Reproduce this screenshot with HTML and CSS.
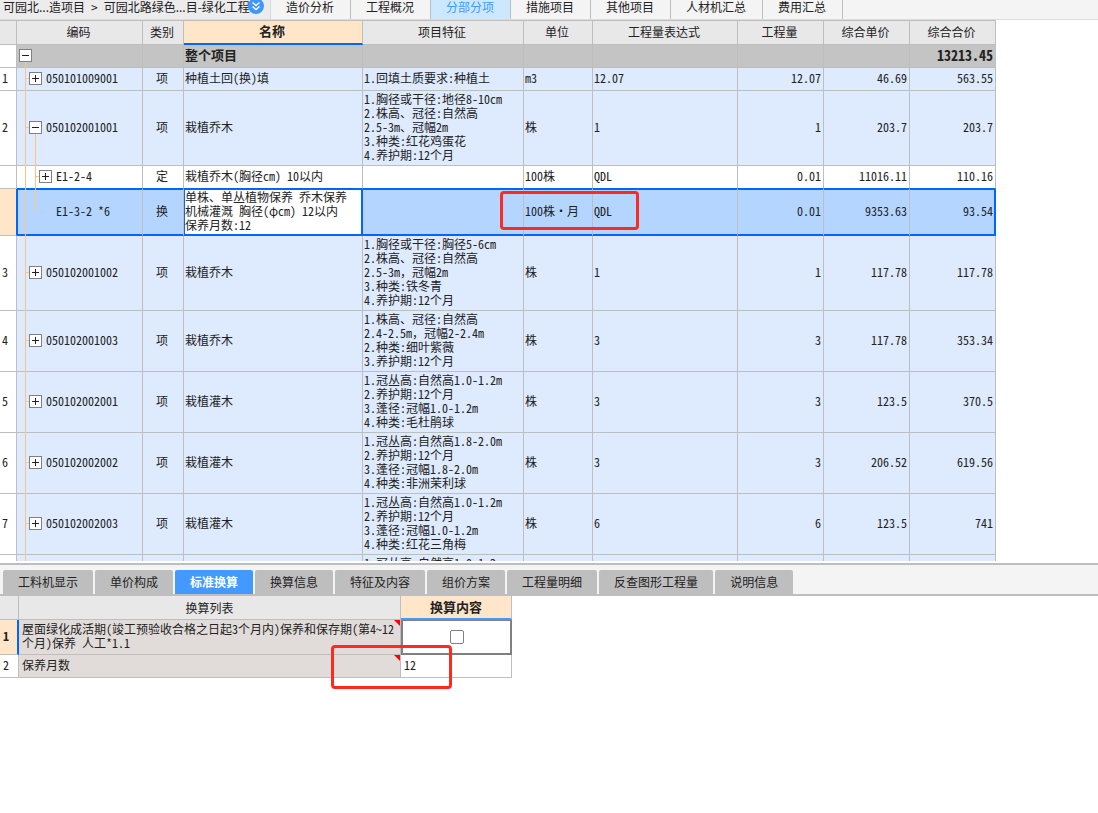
FILE: index.html
```html
<!DOCTYPE html>
<html lang="zh-CN">
<head>
<meta charset="utf-8">
<title>分部分项</title>
<link rel="stylesheet" href="styles.css">
</head>
<body>
<header class="topbar">
  <div class="crumbs"><div class="path"><span>可园北...造项目</span><span>&gt;</span><span>可园北路绿色...目-绿化工程</span></div>
    <button class="crumb-more" type="button" aria-label="展开"><svg width="16" height="16" viewBox="0 0 16 16"><circle cx="8" cy="8" r="8" fill="#3f96fb"/><path d="M4.5 4.5 8 7.5l3.5-3M4.5 8.5 8 11.5l3.5-3" fill="none" stroke="#fff" stroke-width="1.4"/></svg></button>
  </div>
  <nav class="main-tabs">
    <button type="button">造价分析</button>
    <button type="button">工程概况</button>
    <button type="button" class="active">分部分项</button>
    <button type="button">措施项目</button>
    <button type="button">其他项目</button>
    <button type="button">人材机汇总</button>
    <button type="button">费用汇总</button>
  </nav>
</header>

<main class="grid-pane">
  <table class="grid">
    <colgroup><col class="w-num"><col class="w-code"><col class="w-kind"><col class="w-name"><col class="w-feat"><col class="w-unit"><col class="w-expr"><col class="w-val"><col class="w-val"><col class="w-val"></colgroup>
    <thead>
      <tr><th></th><th>编码</th><th>类别</th><th class="current">名称</th><th>项目特征</th><th>单位</th><th>工程量表达式</th><th>工程量</th><th>综合单价</th><th>综合合价</th></tr>
    </thead>
    <tbody>
      <tr class="total"><td class="num"></td><td class="code root"><button class="toggle open" type="button" aria-label="折叠"></button></td><td></td><td>整个项目</td><td></td><td></td><td></td><td></td><td></td><td class="val">13213.45</td></tr>
      <tr><td class="num">1</td><td class="code item"><button class="toggle" type="button" aria-label="展开"></button>050101009001</td><td class="kind">项</td><td>种植土回(换)填</td><td>1.回填土质要求:种植土</td><td>m3</td><td>12.07</td><td class="val">12.07</td><td class="val">46.69</td><td class="val">563.55</td></tr>
      <tr><td class="num">2</td><td class="code item parent"><button class="toggle open" type="button" aria-label="折叠"></button>050102001001</td><td class="kind">项</td><td>栽植乔木</td><td>1.胸径或干径:地径8-10cm<br>2.株高、冠径:自然高<br>2.5-3m、冠幅2m<br>3.种类:红花鸡蛋花<br>4.养护期:12个月</td><td>株</td><td>1</td><td class="val">1</td><td class="val">203.7</td><td class="val">203.7</td></tr>
      <tr class="quota before-selected"><td class="num"></td><td class="code sub"><button class="toggle" type="button" aria-label="展开"></button>E1-2-4</td><td class="kind">定</td><td>栽植乔木(胸径cm) 10以内</td><td></td><td>100株</td><td>QDL</td><td class="val">0.01</td><td class="val">11016.11</td><td class="val">110.16</td></tr>
      <tr class="selected"><td class="num"></td><td class="code sub last">E1-3-2 *6</td><td class="kind">换</td><td class="editing">单株、单丛植物保养 乔木保养<br>机械灌溉 胸径(φcm) 12以内<br>保养月数:12</td><td></td><td>100株·月</td><td>QDL</td><td class="val">0.01</td><td class="val">9353.63</td><td class="val">93.54</td></tr>
      <tr><td class="num">3</td><td class="code item"><button class="toggle" type="button" aria-label="展开"></button>050102001002</td><td class="kind">项</td><td>栽植乔木</td><td>1.胸径或干径:胸径5-6cm<br>2.株高、冠径:自然高<br>2.5-3m，冠幅2m<br>3.种类:铁冬青<br>4.养护期:12个月</td><td>株</td><td>1</td><td class="val">1</td><td class="val">117.78</td><td class="val">117.78</td></tr>
      <tr><td class="num">4</td><td class="code item"><button class="toggle" type="button" aria-label="展开"></button>050102001003</td><td class="kind">项</td><td>栽植乔木</td><td>1.株高、冠径:自然高<br>2.4-2.5m，冠幅2-2.4m<br>2.种类:细叶紫薇<br>3.养护期:12个月</td><td>株</td><td>3</td><td class="val">3</td><td class="val">117.78</td><td class="val">353.34</td></tr>
      <tr><td class="num">5</td><td class="code item"><button class="toggle" type="button" aria-label="展开"></button>050102002001</td><td class="kind">项</td><td>栽植灌木</td><td>1.冠丛高:自然高1.0-1.2m<br>2.养护期:12个月<br>3.蓬径:冠幅1.0-1.2m<br>4.种类:毛杜鹃球</td><td>株</td><td>3</td><td class="val">3</td><td class="val">123.5</td><td class="val">370.5</td></tr>
      <tr><td class="num">6</td><td class="code item"><button class="toggle" type="button" aria-label="展开"></button>050102002002</td><td class="kind">项</td><td>栽植灌木</td><td>1.冠丛高:自然高1.8-2.0m<br>2.养护期:12个月<br>3.蓬径:冠幅1.8-2.0m<br>4.种类:非洲茉利球</td><td>株</td><td>3</td><td class="val">3</td><td class="val">206.52</td><td class="val">619.56</td></tr>
      <tr><td class="num">7</td><td class="code item"><button class="toggle" type="button" aria-label="展开"></button>050102002003</td><td class="kind">项</td><td>栽植灌木</td><td>1.冠丛高:自然高1.0-1.2m<br>2.养护期:12个月<br>3.蓬径:冠幅1.0-1.2m<br>4.种类:红花三角梅</td><td>株</td><td>6</td><td class="val">6</td><td class="val">123.5</td><td class="val">741</td></tr>
      <tr><td class="num"></td><td class="code item"></td><td></td><td></td><td>1.冠丛高:自然高1.0-1.2m<br><br><br><br></td><td></td><td></td><td></td><td></td><td></td></tr>
    </tbody>
  </table>
  <div class="mark mark-unit"></div>
</main>

<section class="detail-pane">
  <nav class="detail-tabs">
    <button type="button">工料机显示</button>
    <button type="button">单价构成</button>
    <button type="button" class="active">标准换算</button>
    <button type="button">换算信息</button>
    <button type="button">特征及内容</button>
    <button type="button">组价方案</button>
    <button type="button">工程量明细</button>
    <button type="button">反查图形工程量</button>
    <button type="button">说明信息</button>
  </nav>
  <div class="detail-body">
    <table class="convert">
      <colgroup><col class="c-num"><col class="c-list"><col class="c-content"></colgroup>
      <thead><tr><th></th><th>换算列表</th><th class="current">换算内容</th></tr></thead>
      <tbody>
        <tr class="row-current"><td class="num">1</td><td class="rule" id="rule1">屋面绿化成活期(竣工预验收合格之日起3个月内)保养和保存期(第4~12<br>个月)保养 人工*1.1</td><td class="check"><input type="checkbox" aria-labelledby="rule1"></td></tr>
        <tr><td class="num">2</td><td class="rule" id="rule2">保养月数</td><td class="entry"><input type="text" value="12" aria-labelledby="rule2"></td></tr>
      </tbody>
    </table>
    <div class="mark mark-months"></div>
  </div>
</section>
</body>
</html>
```

FILE: styles.css
```css
* { box-sizing: border-box; }

body {
  margin: 0;
  height: 100vh;
  display: flex;
  flex-direction: column;
  overflow: hidden;
  background: #fff;
  color: #222;
  font: 12px/14px "Noto Sans Mono CJK SC", "Noto Sans CJK SC", sans-serif;
}

button, input { font: inherit; color: inherit; }
button { border: 0; margin: 0; padding: 0; background: none; }

/* top bar */
.topbar {
  display: flex;
  flex: none;
  height: 20px;
  background: #f4f4f4;
  border-bottom: 1px solid #dcdcdc;
  font-family: "Noto Sans CJK SC", sans-serif;
}
.crumbs {
  display: flex;
  width: 271px;
  padding-left: 3px;
  background: #ececec;
  border-right: 1px solid #d8d8d8;
  white-space: nowrap;
}
.path { display: flex; gap: 6px; width: 245px; }
.crumb-more { height: 14px; }
.crumb-more svg { display: block; margin-top: -2px; }
.main-tabs { display: flex; }
.main-tabs button {
  padding: 0 16px 5px 15px;
  border-right: 1px solid #bebebe;
  white-space: nowrap;
}
.main-tabs .active { background: #cce8ff; color: #4499ff; }

/* tables */
table { border-collapse: separate; border-spacing: 0; table-layout: fixed; }
th, td {
  padding: 1px 3px 3px 1px;
  border: solid #bebebe;
  border-width: 0 1px 1px 0;
  text-align: left;
  white-space: nowrap;
}
th { background: #e8e8e8; font-weight: normal; text-align: center; }
th.current { background: #ffe6c8; font-size: 13px; font-weight: bold; }

.grid-pane {
  position: relative;
  flex: 1;
  min-height: 0;
  overflow: hidden;
  border-bottom: 2px solid #fff;
}
.grid { width: 996px; }
.w-num { width: 17px; }
.w-code { width: 126px; }
.w-kind { width: 41px; }
.w-name { width: 179px; }
.w-feat { width: 161px; }
.w-unit { width: 69px; }
.w-expr { width: 145px; }
.w-val { width: 86px; }

.grid th { height: 25px; border-top-width: 1px; }
.grid th.current { border-bottom: 2px solid #0066ff; }
.grid td { height: 23px; background: #deeafe; }
.grid td.num { background: #fff; padding-left: 2px; }
.grid .kind { text-align: center; }
.grid .val { text-align: right; padding-right: 2px; }
.grid .total td { background: #c4c4c4; font-size: 13px; font-weight: bold; }
.grid .total .num { background: #fff; }
.grid .total .val { font-size: 14px; }
.grid .quota td { background: #fff; }

/* code tree */
.code { position: relative; }
.grid .item { padding-left: 29px; }
.grid .sub { padding-left: 39px; }
.code::before {
  content: "";
  position: absolute;
  left: 8px;
  top: 0;
  bottom: -1px;
  border-left: 1px solid #ffc480;
}
.root::before { top: 50%; }
.parent::after, .sub::after {
  content: "";
  position: absolute;
  left: 18px;
  top: 50%;
  bottom: -1px;
  border-left: 1px solid #ffc480;
}
.sub::after { top: 0; }
.sub.last::after { bottom: 50%; width: 17px; border-bottom: 1px solid #ffc480; }
.toggle {
  position: absolute;
  z-index: 1;
  left: 2px;
  top: calc(50% - 7px);
  width: 13px;
  height: 13px;
  border: 1px solid #808080;
  background:
    linear-gradient(#222, #222) center / 7px 1px no-repeat,
    linear-gradient(#222, #222) center / 1px 7px no-repeat,
    #fff;
}
.toggle.open { background: linear-gradient(#222, #222) center / 7px 1px no-repeat, #fff; }
.item .toggle { left: 12px; }
.sub .toggle { left: 22px; }
.item .toggle::before, .sub .toggle::before {
  content: "";
  position: absolute;
  left: -4px;
  top: 5px;
  width: 3px;
  height: 1px;
  background: #ffc480;
}

/* selected row */
.before-selected td:not(.num) { border-bottom-color: #0066ff; }
.grid .selected td {
  background: #b4d5ff;
  border-bottom-color: #0066ff;
  box-shadow: inset 0 1px #0066ff, inset 0 -1px #0066ff;
}
.grid .selected .num {
  background: #ffe6c8;
  border-bottom-color: #bebebe;
  border-right-color: #0066ff;
  box-shadow: none;
}
.grid .selected .code { box-shadow: inset 1px 1px #0066ff, inset 0 -1px #0066ff; }
.grid .selected .editing {
  background: #fff;
  border-right-color: #0066ff;
  box-shadow: inset 1px 1px #0066ff, inset -1px -1px #0066ff;
}
.grid .selected td:last-child {
  border-right-color: #0066ff;
  box-shadow: inset 0 1px #0066ff, inset -1px -1px #0066ff;
}

/* red call-outs */
.mark {
  position: absolute;
  border: 3px solid #ff2a1c;
  border-radius: 4px;
}
.mark-unit { left: 500px; top: 171px; width: 139px; height: 39px; }
.mark-months { left: 331px; top: 49px; width: 121px; height: 44px; }

/* lower pane */
.detail-pane {
  flex: none;
  min-height: 250px;
  border-top: 2px solid #bebebe;
}
.detail-tabs {
  display: flex;
  gap: 2px;
  padding: 5px 3px 0;
  background: #f4f4f4;
  border-bottom: 2px solid #bebebe;
  font-family: "Noto Sans CJK SC", sans-serif;
}
.detail-tabs button {
  height: 24px;
  padding: 0 15px;
  border-radius: 2px 2px 0 0;
  background: #bebebe;
  white-space: nowrap;
}
.detail-tabs .active { background: #4499ff; color: #fff; font-weight: bold; }
.detail-body { position: relative; }
.convert { width: 512px; }
.c-num { width: 19px; }
.c-list { width: 382px; }
.c-content { width: 111px; }
.convert th { height: 24px; padding: 2px; }
.convert th.current { border-bottom: 2px solid #4499ff; }
.convert td { height: 23px; }
.convert .num { padding-left: 3px; }
.convert .row-current td { height: 35px; }
.convert .row-current .num {
  background: #ffe6c8;
  border-right: 2px solid #0066ff;
  font-weight: bold;
}
.convert .rule { position: relative; padding-left: 3px; background: #e1dcda; }
.rule::after {
  content: "";
  position: absolute;
  right: 0;
  top: 0;
  border-top: 6px solid #ff0000;
  border-left: 6px solid transparent;
}
.convert .check {
  padding: 0;
  border: 2px solid #808080;
  border-top-width: 1px;
  text-align: center;
}
.check input {
  appearance: none;
  display: block;
  width: 14px;
  height: 14px;
  margin: 0 auto;
  border: 1px solid #808080;
  border-radius: 2px;
  background: #fff;
}
.entry input {
  display: block;
  width: 100%;
  height: 14px;
  padding: 0 2px;
  border: 0;
  background: none;
}
```
